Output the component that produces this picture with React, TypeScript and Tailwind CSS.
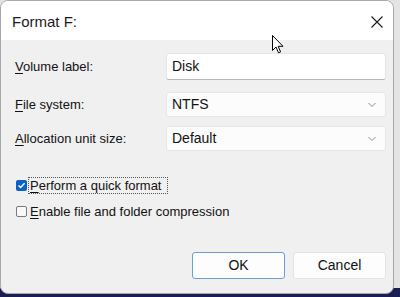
import React from "react";

function Chevron() {
  return (
    <svg width="8" height="5" viewBox="0 0 8 5" className="absolute right-[9px] top-1/2 -translate-y-1/2">
      <path d="M0.5 0.5 L4 4 L7.5 0.5" fill="none" stroke="#8a8a8a" strokeWidth="1" />
    </svg>
  );
}

function Mn({ c, rest }: { c: string; rest: string }) {
  return (
    <span>
      <span className="underline underline-offset-[2px] decoration-[1px]">{c}</span>
      {rest}
    </span>
  );
}

export default function App() {
  return (
    <div
      className="relative w-[400px] h-[297px] overflow-hidden bg-[linear-gradient(to_bottom,#e4e4e6_288px,#1b1d55_288px)] text-[13px] text-[#111]"
      style={{ fontFamily: '"Liberation Sans", Arial, sans-serif' }}
    >
      <div className="w-[394px] h-[294px] rounded-[8px] border border-[#a8a8a8] overflow-hidden flex flex-col bg-[#f0f0f0]">
        <div className="h-[39px] bg-white flex items-center justify-between pl-[11px] pr-[10px] shrink-0">
          <span className="text-[15px] text-[#1a1a1a] pt-[3px]">Format F:</span>
          <svg width="12" height="12" viewBox="0 0 12 12" className="mt-[3px]">
            <path d="M0.5 0.5 L11.5 11.5 M11.5 0.5 L0.5 11.5" stroke="#1a1a1a" strokeWidth="1.1" />
          </svg>
        </div>
        <div className="flex-1 flex flex-col pl-[14px] pr-[7px] pt-[13px] pb-[14px]">
          <div className="flex items-center h-[27px]">
            <div className="w-[151px]"><Mn c="V" rest="olume label:" /></div>
            <div className="w-[220px] h-[27px] bg-white border border-[#e4e4e4] border-b-[#b8b8b8] rounded-[3px] flex items-center pl-[5px] text-[14px]">Disk</div>
          </div>
          <div className="flex items-center h-[25px] mt-[12px]">
            <div className="w-[151px]"><Mn c="F" rest="ile system:" /></div>
            <div className="relative w-[220px] h-[25px] bg-[#fcfcfc] border border-[#e6e6e6] rounded-[3px] flex items-center pl-[5px] text-[14px]">
              NTFS
              <Chevron />
            </div>
          </div>
          <div className="flex items-center h-[25px] mt-[9px]">
            <div className="w-[151px]"><Mn c="A" rest="llocation unit size:" /></div>
            <div className="relative w-[220px] h-[25px] bg-[#fcfcfc] border border-[#e6e6e6] rounded-[3px] flex items-center pl-[5px] text-[14px]">
              Default
              <Chevron />
            </div>
          </div>
          <div className="flex items-center h-[17px] mt-[26px] pl-[1px]">
            <div className="w-[11px] h-[11px] rounded-[2px] bg-[#0a63c4] flex items-center justify-center">
              <svg width="9" height="9" viewBox="0 0 9 9">
                <path d="M1.5 4.6 L3.6 6.6 L7.6 2.3" fill="none" stroke="white" strokeWidth="1.4" />
              </svg>
            </div>
            <div className="ml-[1px] h-[17px] border border-dotted border-[#555] flex items-center pl-[1px] pr-[5px]">
              <Mn c="P" rest="erform a quick format" />
            </div>
          </div>
          <div className="flex items-center h-[17px] mt-[9px] pl-[1px]">
            <div className="w-[11px] h-[11px] rounded-[2px] border border-[#7a7a7a] bg-[#f8f8f8]" />
            <div className="ml-[3px]">
              <Mn c="E" rest="nable file and folder compression" />
            </div>
          </div>
          <div className="mt-auto flex justify-end gap-[8px]">
            <div className="w-[93px] h-[27px] bg-[#fdfdfd] border border-[#6a9fd6] rounded-[3px] flex items-center justify-center text-[14px]">OK</div>
            <div className="w-[93px] h-[27px] bg-[#fdfdfd] border border-[#e2e2e2] rounded-[3px] flex items-center justify-center text-[14px]">Cancel</div>
          </div>
        </div>
      </div>
      <svg width="13" height="20" viewBox="0 0 13 20" className="absolute left-[272px] top-[35px]">
        <path d="M0.5 0.5 L0.5 15.5 L4 12 L6.5 17.8 L8.6 16.9 L6.2 11.3 L11 11.3 Z" fill="white" stroke="black" strokeWidth="1" strokeLinejoin="miter" />
      </svg>
    </div>
  );
}
